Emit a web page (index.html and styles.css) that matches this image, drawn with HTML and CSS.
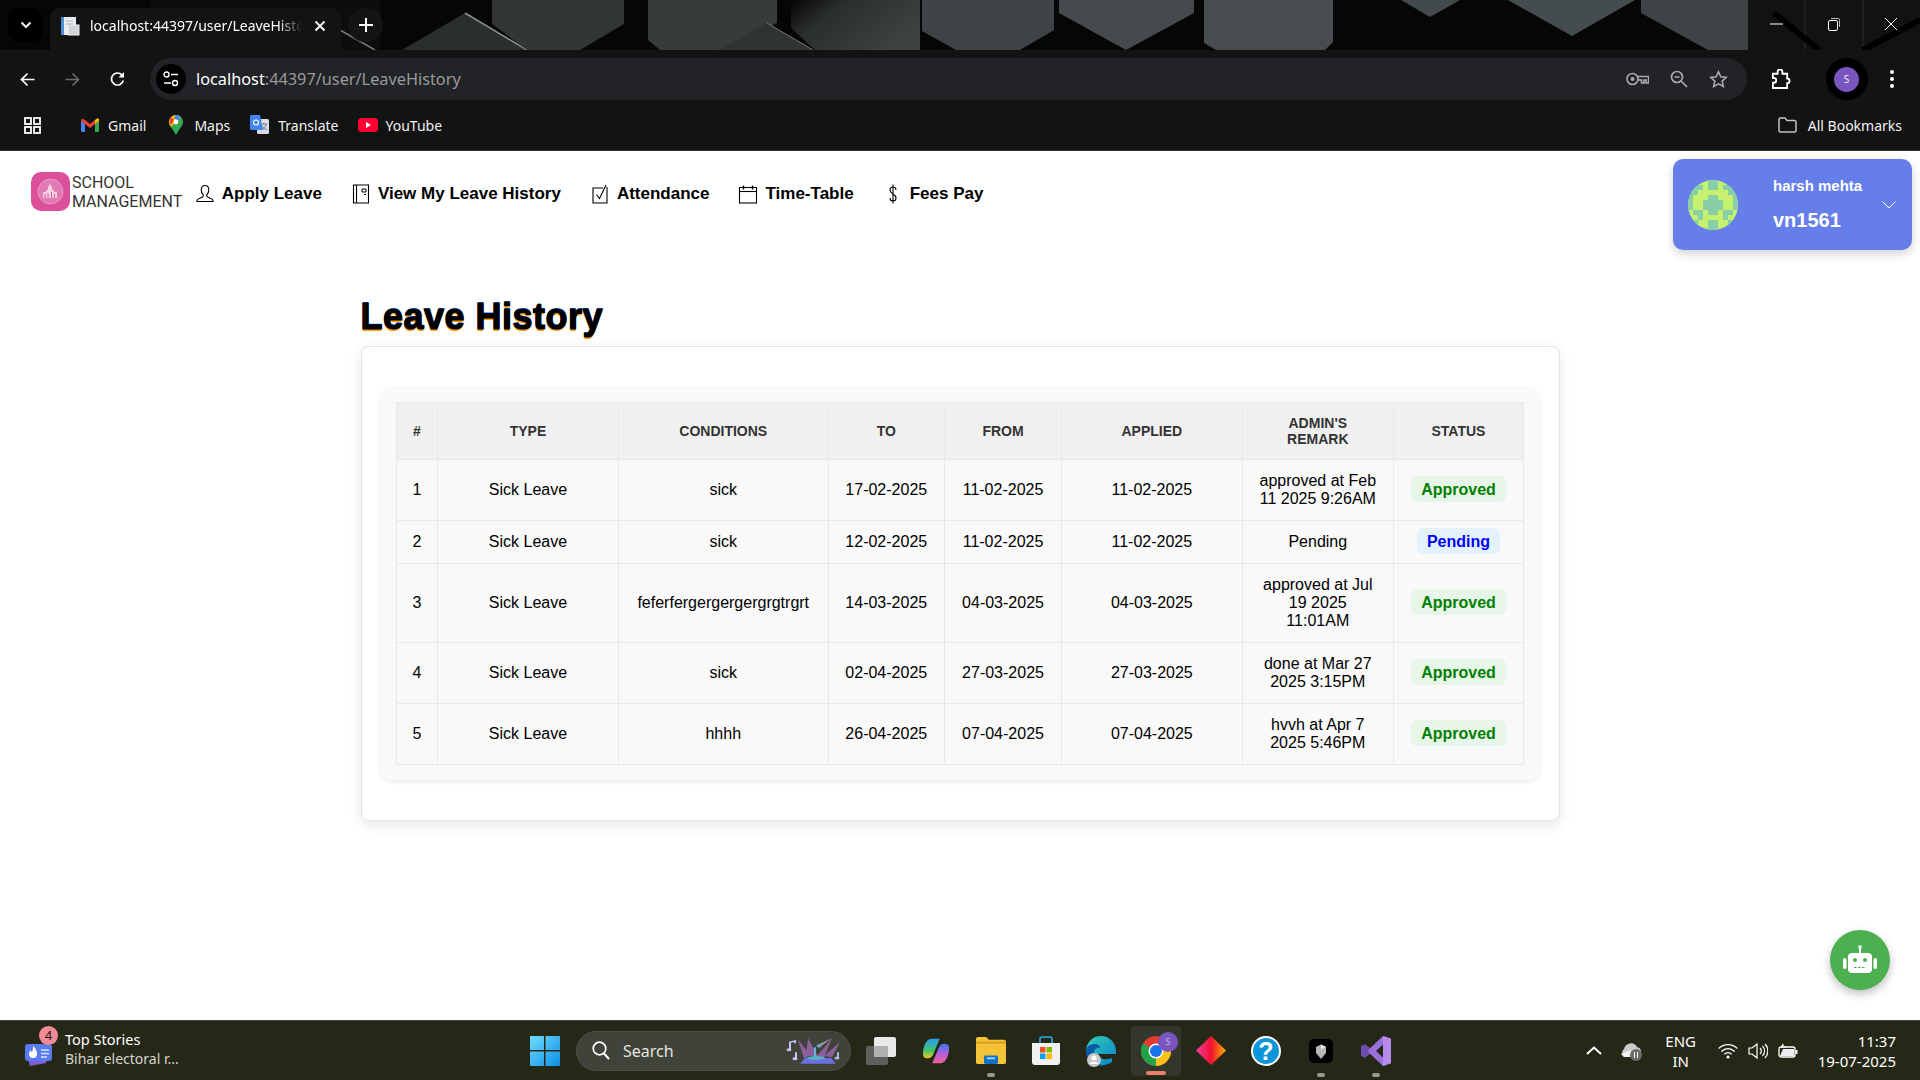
FILE: index.html
```html
<!DOCTYPE html>
<html lang="en">
<head>
<meta charset="utf-8">
<title>Leave History</title>
<link rel="stylesheet" href="styles.css">
</head>
<body>
<header class="chrome">
  <div class="tabstrip">
    <svg class="wallpaper" width="1920" height="50" viewBox="0 0 1920 50">
      <defs>
        <linearGradient id="wpE" x1="0" y1="0" x2="1" y2="0.5"><stop offset="0" stop-color="#050505"/><stop offset="0.35" stop-color="#2b2e2f"/><stop offset="1" stop-color="#3c4142"/></linearGradient>
      </defs>
      <rect width="1920" height="50" fill="#060606"/>
      <path d="M150 0h230v50h-230z" fill="#0d0d0d"/>
      <path d="M465 13L527 50H402z" fill="#2b2e2f"/>
      <path d="M465 13L527 50" stroke="#8c9090" stroke-width="1.5" fill="none"/>
      <path d="M340 30L375 50" stroke="#777" stroke-width="1.5" fill="none"/>
      <path d="M492 0H624V24L580 50H527L492 24z" fill="#323637"/>
      <path d="M648 0H777V23L724 50H660L648 40z" fill="#363b3c"/>
      <path d="M767 23L813 50H719z" fill="#2f3334"/>
      <path d="M767 23L813 50" stroke="#777" stroke-width="1" fill="none"/>
      <path d="M791 0H920V50H815L791 28z" fill="url(#wpE)"/>
      <path d="M922 0H1054V30L1020 50H956L922 31z" fill="#3e4445"/>
      <path d="M1059 0H1194V13L1126 50L1059 13z" fill="#454b4c"/>
      <path d="M1204 0H1333V42L1325 50H1216L1204 43z" fill="#474d4e"/>
      <path d="M1401 0H1460L1430 17z" fill="#434a4b"/>
      <path d="M1508 0H1635L1572 36z" fill="#454c4d"/>
      <path d="M1641 0H1748V50H1708L1641 13z" fill="#3e4445"/>
      <path d="M1748 0H1920V50H1748z" fill="#111313"/>
      <path d="M1805 0V50M1863 0V50" stroke="#2c2e2e" stroke-width="1"/>
      <path d="M1774 13L1819 50M1920 20L1863 50" stroke="#000" stroke-width="6" fill="none"/>
    </svg>
    <div class="tab-menu">
      <svg width="12" height="8" viewBox="0 0 12 8"><path d="M1.5 1.5L6 6l4.500-4.500" fill="none" stroke="#fff" stroke-width="2"/></svg>
    </div>
    <div class="tab">
      <svg class="favicon" width="20" height="20" viewBox="0 0 20 20"><rect x="1" y="1" width="15" height="18" fill="#e8edf2"/><rect x="1" y="1" width="3" height="18" fill="#4a90d0"/><rect x="8" y="9" width="11" height="10" fill="#cfd4d8" stroke="#f2f2f2"/><path d="M6 5h7M6 8h7" stroke="#a9b2ba"/></svg>
      <span class="tab-title">localhost:44397/user/LeaveHistory</span>
      <svg width="12" height="12" viewBox="0 0 12 12"><path d="M1.500 1.500l9 9M10.500 1.500l-9 9" stroke="#fff" stroke-width="1.800"/></svg>
    </div>
    <div class="tab-new">
      <svg width="14" height="14" viewBox="0 0 14 14"><path d="M7 0v14M0 7h14" stroke="#fff" stroke-width="2"/></svg>
    </div>
    <div class="win-controls">
      <svg width="14" height="14" viewBox="0 0 14 14"><path d="M0 7h13" stroke="#fff" stroke-width="1"/></svg>
      <svg width="14" height="14" viewBox="0 0 14 14"><rect x="1.500" y="3.500" width="9" height="10" rx="1.500" fill="none" stroke="#fff"/><path d="M4 1.500h7.500a1 1 0 0 1 1 1V10" fill="none" stroke="#bbb"/></svg>
      <svg width="14" height="14" viewBox="0 0 14 14"><path d="M1 1l12 12M13 1L1 13" stroke="#fff" stroke-width="1"/></svg>
    </div>
  </div>
  <div class="toolbar">
    <svg width="15" height="15" viewBox="0 0 15 15"><path d="M14.500 7.500H1.500M7.500 1.500l-6 6 6 6" fill="none" stroke="#fff" stroke-width="1.700"/></svg>
    <svg width="15" height="15" viewBox="0 0 15 15"><path d="M.5 7.500h13M7.500 1.500l6 6-6 6" fill="none" stroke="#6b6b6b" stroke-width="1.700"/></svg>
    <svg width="15" height="16" viewBox="0 0 15 16"><path d="M13.300 9.500A6 6 0 1 1 11.800 3.800L13.500 5.500" fill="none" stroke="#fff" stroke-width="1.700"/><path d="M14 1v5.500H8.500z" fill="#fff"/></svg>
    <div class="omnibox">
      <div class="site-btn">
        <svg width="16" height="16" viewBox="0 0 16 16"><circle cx="3.500" cy="3.500" r="2.500" fill="none" stroke="#fff" stroke-width="1.400"/><path d="M8 3.500h7M1 12h7" stroke="#fff" stroke-width="1.400"/><circle cx="12" cy="12" r="2.500" fill="none" stroke="#fff" stroke-width="1.400"/></svg>
      </div>
      <div class="url"><span class="url-host">localhost</span>:44397/user/LeaveHistory</div>
      <div class="omni-icons">
        <svg width="23" height="14" viewBox="0 0 23 14"><circle cx="6.500" cy="7" r="5.500" fill="none" stroke="#aaa" stroke-width="1.600"/><circle cx="6.500" cy="7" r="2" fill="#aaa"/><path d="M12 4.500h10.500V11H20V8h-2v3h-2.500V8H12" fill="none" stroke="#aaa" stroke-width="1.600"/></svg>
        <svg width="18" height="18" viewBox="0 0 18 18"><circle cx="7" cy="7" r="5.500" fill="none" stroke="#aaa" stroke-width="1.700"/><path d="M4.500 7h5M11 11l6 6" stroke="#aaa" stroke-width="1.700"/></svg>
        <svg width="19" height="19" viewBox="0 0 19 19"><path d="M9.500 1.800l2.300 5 5.400.6-4 3.700 1.100 5.400-4.800-2.700-4.800 2.700 1.100-5.400-4-3.700 5.400-.6z" fill="none" stroke="#aaa" stroke-width="1.600"/></svg>
      </div>
    </div>
    <div class="tool-right">
      <svg width="21" height="21" viewBox="0 0 21 21"><path d="M2 5h5V3a2.500 2.500 0 0 1 5 0v2h5v5a2.500 2.500 0 0 1 0 5v5H2v-5.500h1a2.500 2.500 0 0 0 0-5H2z" fill="none" stroke="#fff" stroke-width="1.900" transform="scale(.95)"/></svg>
      <div class="profile-pill"><span class="profile-dot">S</span></div>
      <svg width="4" height="18" viewBox="0 0 4 18"><circle cx="2" cy="2" r="2" fill="#fff"/><circle cx="2" cy="9" r="2" fill="#fff"/><circle cx="2" cy="16" r="2" fill="#fff"/></svg>
    </div>
  </div>
  <div class="bookmarks">
    <svg class="apps" width="17" height="17" viewBox="0 0 17 17"><g fill="none" stroke="#fff" stroke-width="1.800"><rect x="1" y="1" width="6" height="6"/><rect x="10" y="1" width="6" height="6"/><rect x="1" y="10" width="6" height="6"/><rect x="10" y="10" width="6" height="6"/></g></svg>
    <div class="bm bm-gmail">
      <svg width="18" height="14" viewBox="0 0 18 14"><path d="M0 3v9.500A1.500 1.500 0 0 0 1.500 14H4V6z" fill="#4285f4"/><path d="M14 6v8h2.500a1.500 1.500 0 0 0 1.500-1.500V3z" fill="#34a853"/><path d="M0 3l4 3 5 4 5-4 4-3-1-2.500L14 2 9 6 4 2 1 .5z" fill="#ea4335"/><path d="M14 2l2.500-1.700C17.500 0 18 1 18 3l-4 3z" fill="#fbbc04"/></svg>
      <span>Gmail</span>
    </div>
    <div class="bm bm-maps">
      <svg width="14" height="20" viewBox="0 0 14 20"><path d="M7 0a7 7 0 0 1 7 7c0 4-4 7-7 13C4 14 0 11 0 7a7 7 0 0 1 7-7z" fill="#34a853"/><path d="M7 0a7 7 0 0 1 5 2L2 12C1 10.500 0 9 0 7a7 7 0 0 1 7-7z" fill="#fbbc04"/><path d="M7 0a7 7 0 0 1 5 2L8.500 5.500 5 3z" fill="#4285f4"/><path d="M2 2L5 5 2 10C.5 8 0 5 2 2z" fill="#ea4335"/><circle cx="7" cy="7" r="2.400" fill="#fff"/></svg>
      <span>Maps</span>
    </div>
    <div class="bm bm-translate">
      <svg width="19" height="20" viewBox="0 0 19 20"><rect x="7" y="4" width="12" height="15" rx="1.500" fill="#d7dde4"/><path d="M10 9h7M13.500 8v1M11 15c3-1 5-3 5-6M12 11c1 2 3 3 5 4" fill="none" stroke="#777"/><path d="M1.500 0H10l3 15H1.500A1.500 1.500 0 0 1 0 13.500v-12A1.500 1.500 0 0 1 1.500 0z" fill="#4285f4"/><circle cx="6" cy="7.500" r="2.500" fill="none" stroke="#fff" stroke-width="1.200"/></svg>
      <span>Translate</span>
    </div>
    <div class="bm bm-yt">
      <svg width="20" height="14" viewBox="0 0 20 14"><rect width="20" height="14" rx="3.500" fill="#ff0033"/><path d="M8 4l5 3-5 3z" fill="#fff"/></svg>
      <span>YouTube</span>
    </div>
    <div class="bm bm-all">
      <svg width="19" height="16" viewBox="0 0 19 16"><path d="M1 2.500A1.500 1.500 0 0 1 2.500 1H7l2 2.500h7.500A1.500 1.500 0 0 1 18 5v8.500a1.500 1.500 0 0 1-1.500 1.500h-14A1.500 1.500 0 0 1 1 13.500z" fill="none" stroke="#c2c2c2" stroke-width="1.500"/></svg>
      <span>All Bookmarks</span>
    </div>
  </div>
</header>

<main class="page">
  <nav class="navbar">
    <div class="brand">
      <div class="brand-logo">
        <svg width="27" height="27" viewBox="0 0 27 27"><circle cx="13.500" cy="13.500" r="12.500" fill="#e07bb4" stroke="#eda4cd" stroke-width=".8"/><path d="M6 20v-6h3v-2h2v-3l2-3 2 3v3h2v2h3v6z" fill="#f5cfe4"/><path d="M8 20v-4M11 20v-5M14.500 20v-6M17.500 20v-4" stroke="#d95aa0" stroke-width="1"/></svg>
      </div>
      <div class="brand-text">SCHOOL<br>MANAGEMENT</div>
    </div>
    <ul class="menu">
      <li class="menu-item">
        <svg width="20" height="20" viewBox="0 0 20 20"><path d="M10 1.500c2.400 0 3.800 1.900 3.800 4.300 0 2.200-.9 4-2 5v1.500c0 1 4.700 2 5.700 3.200.6.800.6 1.500.6 2H1.900c0-.5 0-1.200.6-2 1-1.200 5.700-2.200 5.700-3.200v-1.500c-1.100-1-2-2.800-2-5 0-2.400 1.400-4.300 3.800-4.300z" fill="none" stroke="#000" stroke-width="1.100"/></svg>
        <span>Apply Leave</span>
      </li>
      <li class="menu-item">
        <svg width="20" height="20" viewBox="0 0 20 20"><path d="M2.500 1h15v18h-15zM5.500 1v18" fill="none" stroke="#000" stroke-width="1.100"/><path d="M11 5h4v3h-4zM13 10.500h2" fill="none" stroke="#000" stroke-width="1"/></svg>
        <span>View My Leave History</span>
      </li>
      <li class="menu-item">
        <svg width="20" height="20" viewBox="0 0 20 20"><path d="M17 3v16H3V4h10" fill="none" stroke="#000" stroke-width="1.100"/><path d="M6.500 10.500l3 4L16 1" fill="none" stroke="#000" stroke-width="1.100"/></svg>
        <span>Attendance</span>
      </li>
      <li class="menu-item">
        <svg width="20" height="20" viewBox="0 0 20 20"><rect x="1.500" y="3.500" width="17" height="15.500" fill="none" stroke="#000" stroke-width="1.100"/><path d="M1.500 7.500h17" stroke="#000" stroke-width="1.100"/><path d="M5.500 1.500v4M14.500 1.500v4" stroke="#000" stroke-width="1.400"/></svg>
        <span>Time-Table</span>
      </li>
      <li class="menu-item">
        <svg width="20" height="20" viewBox="0 0 20 20"><path d="M13 6c0-2-1.500-3-3-3S7 4 7 6c0 4.500 6 3.500 6 8 0 2-1.500 3-3 3s-3-1-3-3M10 .5v19" fill="none" stroke="#000" stroke-width="1.100"/></svg>
        <span>Fees Pay</span>
      </li>
    </ul>
    <div class="user-card">
      <svg class="avatar" width="50" height="50" viewBox="0 0 10 10">
        <rect width="10" height="10" fill="#c6f16f"/>
        <g fill="#88cfa7">
          <path d="M4 0h2v2H4zM0 1h3v1H0zM7 1h3v1H7zM0 2h2v1H0zM8 2h2v1H8z"/>
          <path d="M4 3h2v1H4zM3 4h4v2H3zM4 6h2v1H4z"/>
          <path d="M0 3h1v3H0zM9 3h1v3H9zM2 6h1v1H2zM7 6h1v1H7zM1 6h1v1H1zM8 6h1v1H8z"/>
          <path d="M2 7h1v1H2zM7 7h1v1H7zM4 8h2v2H4z"/>
          <path d="M0 8h2v2H0zM8 8h2v2H8z"/>
        </g>
      </svg>
      <div class="user-text">
        <div class="user-name">harsh mehta</div>
        <div class="user-id">vn1561</div>
      </div>
      <svg class="user-caret" width="14" height="8" viewBox="0 0 14 8"><path d="M.5.5L7 7 13.500.5" fill="none" stroke="#fff" stroke-width="1"/></svg>
    </div>
  </nav>

  <section class="content">
    <h1 class="title">Leave History</h1>
    <div class="card">
      <div class="panel">
        <table class="grid">
          <colgroup>
            <col class="c1"><col class="c2"><col class="c3"><col class="c4"><col class="c5"><col class="c6"><col class="c7"><col class="c8">
          </colgroup>
          <thead>
            <tr><th>#</th><th>Type</th><th>Conditions</th><th>To</th><th>From</th><th>Applied</th><th>Admin's Remark</th><th>Status</th></tr>
          </thead>
          <tbody>
            <tr><td>1</td><td>Sick Leave</td><td>sick</td><td>17-02-2025</td><td>11-02-2025</td><td>11-02-2025</td><td>approved at Feb 11 2025 9:26AM</td><td><span class="badge ok">Approved</span></td></tr>
            <tr><td>2</td><td>Sick Leave</td><td>sick</td><td>12-02-2025</td><td>11-02-2025</td><td>11-02-2025</td><td>Pending</td><td><span class="badge wait">Pending</span></td></tr>
            <tr><td>3</td><td>Sick Leave</td><td>feferfergergergergrgtrgrt</td><td>14-03-2025</td><td>04-03-2025</td><td>04-03-2025</td><td>approved at Jul 19 2025 11:01AM</td><td><span class="badge ok">Approved</span></td></tr>
            <tr><td>4</td><td>Sick Leave</td><td>sick</td><td>02-04-2025</td><td>27-03-2025</td><td>27-03-2025</td><td>done at Mar 27 2025 3:15PM</td><td><span class="badge ok">Approved</span></td></tr>
            <tr><td>5</td><td>Sick Leave</td><td>hhhh</td><td>26-04-2025</td><td>07-04-2025</td><td>07-04-2025</td><td>hvvh at Apr 7 2025 5:46PM</td><td><span class="badge ok">Approved</span></td></tr>
          </tbody>
        </table>
      </div>
    </div>
  </section>

  <button class="chat-btn" type="button" aria-label="Chat">
    <svg width="60" height="60" viewBox="0 0 60 60">
      <rect x="29" y="16" width="2" height="8" fill="#fff"/><circle cx="30" cy="17" r="1.800" fill="#fff"/>
      <rect x="18" y="23" width="24" height="20" rx="4" fill="#fff"/>
      <rect x="13" y="28" width="3.500" height="11" rx="1.700" fill="#fff"/><rect x="43.500" y="28" width="3.500" height="11" rx="1.700" fill="#fff"/>
      <circle cx="25" cy="30" r="2" fill="#4caf50"/><circle cx="35" cy="30" r="2" fill="#4caf50"/>
      <path d="M24 37.500h12" stroke="#4caf50" stroke-width="1" stroke-dasharray="2.500 1.500"/>
    </svg>
  </button>
</main>

<footer class="taskbar">
  <div class="widget">
    <div class="widget-icon">
      <svg width="28" height="32" viewBox="0 0 28 32"><path d="M3 24l20-2-2 6-16 3z" fill="#7e5fd0"/><rect x="0" y="9" width="27" height="17" rx="3" fill="#5a7af0"/><path d="M8 11c3 3 4 5 4 8a4 4 0 0 1-8 0c0-2 1-3 2-4 0 1 0 2 1 2 1-2 1-4 1-6z" fill="#fff"/><path d="M16 15h8M16 18.500h8M16 22h6" stroke="#dce4ff" stroke-width="1.500"/></svg>
      <span class="widget-badge">4</span>
    </div>
    <div class="widget-text">
      <div class="widget-title">Top Stories</div>
      <div class="widget-sub">Bihar electoral r...</div>
    </div>
  </div>
  <svg class="start" width="30" height="30" viewBox="0 0 30 30">
    <defs><linearGradient id="winA" x1="0" y1="0" x2="1" y2="1"><stop offset="0" stop-color="#6fdcfb"/><stop offset="1" stop-color="#0c8fe8"/></linearGradient></defs>
    <path d="M1 0h13v14H0V1a1 1 0 0 1 1-1zM15.500 0H29a1 1 0 0 1 1 1v13H15.500zM0 15.500h14V30H1a1 1 0 0 1-1-1zM15.500 15.500H30V29a1 1 0 0 1-1 1H15.500z" fill="url(#winA)"/>
  </svg>
  <div class="search">
    <svg width="18" height="19" viewBox="0 0 18 19"><circle cx="7.500" cy="7.500" r="6.300" fill="none" stroke="#fff" stroke-width="1.700"/><path d="M12 12.500l5 5.500" stroke="#fff" stroke-width="2"/></svg>
    <span class="search-text">Search</span>
    <svg class="search-art" width="56" height="28" viewBox="0 0 56 44" preserveAspectRatio="none">
      <path d="M12 4l12 24-6 6zM22 2l10 28H20zM46 2l-8 30H30zM54 8l-8 24-8-2z" fill="#8a5f9c"/>
      <path d="M32 12l14-10-11 12z" fill="#9aa5ae"/><circle cx="33" cy="14" r="2.500" fill="#6ba4c0"/>
      <path d="M29 16v18" stroke="#6bb0d8" stroke-width="2"/>
      <path d="M14 42l5-9h26l5 9z" fill="#6b70e0"/><ellipse cx="30" cy="33" rx="9" ry="3" fill="#58b0c8"/>
      <path d="M4 8v12M4 8l5-2v4" stroke="#c8c0f0" stroke-width="2" fill="none"/><circle cx="3" cy="20" r="2.500" fill="#c8c0f0"/>
      <path d="M10 24v10" stroke="#c8c0f0" stroke-width="2"/><circle cx="9" cy="34" r="2.500" fill="#c8c0f0"/>
      <path d="M52 24v9" stroke="#a8b8e8" stroke-width="2"/><circle cx="51" cy="33" r="2.500" fill="#a8b8e8"/>
    </svg>
  </div>
  <div class="apps-row">
    <div class="app">
      <svg width="30" height="28" viewBox="0 0 30 28"><rect x="0" y="9" width="22" height="19" rx="2" fill="#5e5e5e"/><rect x="8" y="0" width="22" height="20" rx="2" fill="#e9e9e9"/><rect x="8" y="9" width="14" height="11" fill="#b0b0b0"/></svg>
    </div>
    <div class="app">
      <svg width="28" height="26" viewBox="0 0 30 32" preserveAspectRatio="none">
        <defs><linearGradient id="copA" x1="0" y1="0" x2="0" y2="1"><stop offset="0" stop-color="#2a9df0"/><stop offset=".6" stop-color="#3fc56c"/><stop offset="1" stop-color="#f5c518"/></linearGradient><linearGradient id="copB" x1="0" y1="0" x2="0" y2="1"><stop offset="0" stop-color="#3a7af0"/><stop offset=".5" stop-color="#b060e0"/><stop offset="1" stop-color="#f06090"/></linearGradient></defs>
        <path d="M10 1h9L12 20c-1 3-3 5-6 5-4 0-5-3-5-5 0-8 3-19 9-19z" fill="url(#copA)"/>
        <path d="M20 31h-9l7-19c1-3 3-5 6-5 4 0 5 3 5 5 0 8-3 19-9 19z" fill="url(#copB)"/>
      </svg>
    </div>
    <div class="app dotted">
      <svg width="30" height="27" viewBox="0 0 30 29" preserveAspectRatio="none"><path d="M0 2a2 2 0 0 1 2-2h8l3 3h15a2 2 0 0 1 2 2v22a2 2 0 0 1-2 2H2a2 2 0 0 1-2-2z" fill="#f3c338"/><path d="M0 5h30v2H0z" fill="#d99a1e"/><rect x="8" y="20" width="14" height="9" rx="1.500" fill="#1273c4"/><rect x="11" y="22" width="8" height="1.800" fill="#a8d8ff"/></svg>
    </div>
    <div class="app">
      <svg width="30" height="30" viewBox="0 0 30 30"><path d="M9 8V3a2 2 0 0 1 2-2h8a2 2 0 0 1 2 2v5" fill="none" stroke="#25b0e8" stroke-width="1.600"/><path d="M1 7h28v19a3 3 0 0 1-3 3H4a3 3 0 0 1-3-3z" fill="#f0f0f0"/><rect x="9" y="11" width="5.500" height="5.500" fill="#f25022"/><rect x="15.500" y="11" width="5.500" height="5.500" fill="#7fba00"/><rect x="9" y="17.500" width="5.500" height="5.500" fill="#00a4ef"/><rect x="15.500" y="17.500" width="5.500" height="5.500" fill="#ffb900"/></svg>
    </div>
    <div class="app">
      <svg width="30" height="32" viewBox="0 0 30 32">
        <defs><linearGradient id="edgA" x1="0" y1="0" x2="1" y2="1"><stop offset="0" stop-color="#2fd0b0"/><stop offset="1" stop-color="#0c7fd0"/></linearGradient></defs>
        <path d="M15 1a15 15 0 0 1 15 15v3H12c0 4 5 7 14 4v4c-6 4-13 4-18 1C2 24 0 18 0 14 2 5 8 1 15 1z" fill="url(#edgA)"/>
        <path d="M0 16c0-5 5-7 9-7 3 0 5 2 5 4-3-1-6 1-6 5s3 10 10 13C6 31 0 24 0 16z" fill="#0a5aa8"/>
        <circle cx="8" cy="25" r="7" fill="#c8c8c8"/><circle cx="8" cy="23" r="2.500" fill="#fff"/><path d="M3.500 29c1-3 8-3 9 0z" fill="#fff"/>
      </svg>
    </div>
    <div class="app active">
      <svg width="30" height="30" viewBox="0 0 30 30"><circle cx="15" cy="15" r="15" fill="#e33b2e"/><path d="M15 15L28 7.500A15 15 0 0 1 15 30z" fill="#fbc116"/><path d="M15 15L15 30A15 15 0 0 1 2 7.500z" fill="#22a34b"/><circle cx="15" cy="15" r="7.500" fill="#fff"/><circle cx="15" cy="15" r="6" fill="#1a73e8"/></svg>
      <span class="profile-badge">S</span>
    </div>
    <div class="app">
      <svg width="30" height="29" viewBox="0 0 30 38" preserveAspectRatio="none"><defs><linearGradient id="dmA" x1="0" y1="0" x2="1" y2="0"><stop offset="0" stop-color="#f040a0"/><stop offset=".5" stop-color="#f01030"/><stop offset="1" stop-color="#ffb000"/></linearGradient></defs><path d="M15 0l15 19-15 19L0 19z" fill="url(#dmA)"/></svg>
    </div>
    <div class="app">
      <svg width="30" height="30" viewBox="0 0 30 30"><circle cx="15" cy="15" r="15" fill="#fff"/><circle cx="15" cy="15" r="13" fill="#0a96d8"/><text x="15" y="24" text-anchor="middle" class="help-mark">?</text></svg>
    </div>
    <div class="app dotted">
      <svg width="24" height="24" viewBox="0 0 24 24"><rect width="24" height="24" rx="5" fill="#000"/><path d="M7 8l5-2.500L17 8v6l-5 6-5-6z" fill="#b8b8b8"/><path d="M12 5.500L17 8l-5 2.500z" fill="#e8e8e8"/></svg>
    </div>
    <div class="app dotted">
      <svg width="30" height="30" viewBox="0 0 30 32" preserveAspectRatio="none"><path d="M22 0l8 3v26l-8 3L9 19l-5 4-4-2V11l4-2 5 4zM22 9l-7 7 7 7z" fill="#9a6fd8"/><path d="M22 0l8 3v26l-8 3z" fill="#b58cee"/><path d="M0 11l4-2 5 4-2 3 2 3-5 4-4-2z" fill="#6d4bb0"/></svg>
    </div>
  </div>
  <div class="tray">
    <svg class="tray-chev" width="16" height="9" viewBox="0 0 16 9"><path d="M1 8l7-6.500L15 8" fill="none" stroke="#fff" stroke-width="2"/></svg>
    <div class="tray-cloud">
      <svg width="22" height="20" viewBox="0 0 22 20"><path d="M3 16a5 5 0 0 1 0-8 7 7 0 0 1 13-2 5 5 0 0 1 3 8v2z" fill="#c8ccc8"/><path d="M0 13l9-4 5 7H3z" fill="#eef0ee"/><circle cx="15" cy="14" r="6" fill="#6c6c6c"/><path d="M13.500 11v6M16.500 11v6" stroke="#fff" stroke-width="1"/></svg>
    </div>
    <div class="tray-lang">ENG<br>IN</div>
    <div class="tray-icons">
      <svg width="20" height="16" viewBox="0 0 20 16"><g fill="none" stroke="#fff" stroke-width="1.300"><path d="M.7 5.500a13 13 0 0 1 18.600 0"/><path d="M3.500 8.500a9 9 0 0 1 13 0"/><path d="M6.500 11.200a5 5 0 0 1 7 0"/></g><circle cx="10" cy="14" r="1.600" fill="#fff"/></svg>
      <svg width="20" height="16" viewBox="0 0 20 16"><path d="M1 5h3l5-4v14l-5-4H1z" fill="none" stroke="#fff" stroke-width="1.200"/><path d="M12 5a4 4 0 0 1 0 6M14.500 3a7 7 0 0 1 0 10M17 1a10 10 0 0 1 0 14" fill="none" stroke="#fff" stroke-width="1.200"/></svg>
      <svg width="20" height="16" viewBox="0 0 20 16"><rect x="1" y="4" width="16" height="10" rx="2" fill="none" stroke="#fff" stroke-width="1.300"/><rect x="17.500" y="7" width="2" height="4" fill="#fff"/><path d="M2 13l3-7h11v7z" fill="#eee"/><path d="M3 5l2-4v3h3" fill="none" stroke="#fff" stroke-width="1.100"/></svg>
    </div>
    <div class="tray-clock">11:37<br>19-07-2025</div>
  </div>
</footer>
</body>
</html>
```
FILE: styles.css
```css
* { box-sizing: border-box; }
html, body { margin: 0; padding: 0; height: 100%; }
body {
  display: flex;
  flex-direction: column;
  height: 1080px;
  overflow: hidden;
  background: #fff;
  font-family: "Liberation Sans", Arial, sans-serif;
  color: #000;
}
svg { display: block; flex: none; }

/* Browser chrome */
.chrome { flex: none; background: #131313; font-family: "Noto Sans", "Open Sans", sans-serif; color: #fff; }
.tabstrip { position: relative; height: 50px; display: flex; align-items: flex-start; padding: 8px 0 0 8px; }
.wallpaper { position: absolute; left: 0; top: 0; }
.tab-menu, .tab-new {
  position: relative;
  width: 35px;
  height: 34px;
  border-radius: 12px;
  display: flex;
  align-items: center;
  justify-content: center;
}
.tab-menu { background: #000; }
.tab-new { background: #141414; margin-left: 7px; border-radius: 17px; }
.tab {
  position: relative;
  margin-left: 7px;
  width: 291px;
  height: 42px;
  padding: 0 15px 7px 10px;
  background: #131313;
  border-radius: 10px 10px 0 0;
  display: flex;
  align-items: center;
  gap: 10px;
}
.tab-title {
  flex: 1;
  min-width: 0;
  height: 20px;
  font-size: 14px;
  line-height: 20px;
  white-space: nowrap;
  overflow: hidden;
  -webkit-mask-image: linear-gradient(to right, #000 88%, transparent 99%);
  mask-image: linear-gradient(to right, #000 88%, transparent 99%);
}
.win-controls {
  position: relative;
  margin-left: auto;
  padding: 9px 22px 0 0;
  display: flex;
  gap: 43px;
}
.toolbar { height: 56px; padding: 2px 0 0 20px; display: flex; align-items: center; gap: 30px; }
.omnibox {
  flex: 1;
  height: 42px;
  margin-left: -5px;
  padding: 0 19px 0 6px;
  border-radius: 21px;
  background: #212327;
  display: flex;
  align-items: center;
}
.site-btn {
  width: 30px;
  height: 30px;
  border-radius: 50%;
  background: #000;
  display: flex;
  align-items: center;
  justify-content: center;
}
.url { margin-left: 10px; font-size: 16.300px; color: #9a9a9a; white-space: nowrap; }
.url-host { color: #fff; }
.omni-icons { margin-left: auto; display: flex; align-items: center; gap: 21px; }
.tool-right { width: 149.500px; margin-left: -6px; display: flex; align-items: center; }
.profile-pill {
  margin-left: 34px;
  width: 42px;
  height: 42px;
  border-radius: 21px;
  background: #000;
  display: flex;
  align-items: center;
  justify-content: center;
}
.profile-dot {
  width: 25px;
  height: 25px;
  border-radius: 50%;
  background: #7a55c0;
  color: #eee;
  font-size: 10px;
  display: flex;
  align-items: center;
  justify-content: center;
}
.tool-right > svg:last-child { margin-left: 22px; }
.bookmarks {
  height: 44px;
  padding-left: 24px;
  padding-bottom: 6px;
  display: flex;
  align-items: center;
  font-size: 14px;
  color: #f2f2f2;
}
.apps { margin-right: 40px; }
.bm { display: flex; align-items: center; gap: 9px; margin-right: 21px; }
.bm-gmail { margin-right: 23px; }
.bm-maps { gap: 11px; margin-right: 20px; }
.bm-translate { margin-right: 20px; }
.bm-yt { gap: 7px; }
.bm-all { margin-left: auto; margin-right: 18px; gap: 11px; }

/* Page */
.page { position: relative; flex: 1; min-height: 0; border-top: 1px solid #333; }
.navbar { height: 108px; padding: 8px 8px 0 31px; display: flex; align-items: flex-start; }
.brand { display: flex; align-items: center; gap: 2px; margin-top: 13px; }
.brand-logo {
  width: 39px;
  height: 39px;
  border-radius: 10px;
  background: #dc4f9b;
  display: flex;
  align-items: center;
  justify-content: center;
}
.brand-text { font-family: Roboto, sans-serif; font-size: 16px; line-height: 19px; color: #333; }
.menu {
  list-style: none;
  margin: 13px 0 0 12.500px;
  padding: 6px 0 0;
  display: flex;
  gap: 29px;
  font-size: 17px;
  font-weight: bold;
}
.menu-item { display: flex; align-items: center; gap: 7px; height: 36px; margin-top: -2px; }
.user-card {
  margin-left: auto;
  width: 239px;
  height: 91px;
  padding: 0 15px;
  border-radius: 10px;
  background: #667eea;
  color: #fff;
  box-shadow: 0 4px 10px rgba(0,0,0,.18);
  display: flex;
  align-items: center;
}
.avatar { border-radius: 50%; }
.user-text { margin-left: 35px; font-weight: bold; }
.user-name { font-size: 15px; line-height: 18px; margin-bottom: 14px; margin-top: 0; }
.user-id { font-size: 20px; line-height: 23px; }
.user-caret { margin-left: auto; margin-right: 1px; }

.content { width: 1199px; margin: 37px auto 0; }
.title {
  margin: 0 0 9px;
  font-size: 36px;
  line-height: 41px;
  font-weight: bold;
  letter-spacing: .5px;
  color: #000;
  -webkit-text-stroke: 1.200px #000;
  text-shadow: 0 -1.500px 0 #0070ff, 0 1.500px 0 #ffa000;
}
.card {
  height: 475px;
  padding: 40px 18.500px;
  background: #fff;
  border: 1px solid #e2e4e6;
  border-radius: 8px;
  box-shadow: 0 4px 14px rgba(0,0,0,.1);
}
.panel {
  height: 393px;
  padding: 15px 16px;
  background: #f9f9f9;
  border-radius: 12px;
  box-shadow: 0 2px 4px rgba(0,0,0,.08);
}
.grid { width: 1127px; table-layout: fixed; border-collapse: collapse; font-size: 16px; line-height: 18px; }
.c1 { width: 41px; }
.c2 { width: 181px; }
.c3 { width: 209.500px; }
.c4 { width: 116.500px; }
.c5 { width: 117px; }
.c6 { width: 180.600px; }
.c7 { width: 151.400px; }
.c8 { width: 130px; }
.grid th, .grid td { border: 1px solid #e6eaee; text-align: center; vertical-align: middle; }
.grid th {
  height: 57px;
  padding: 12px 15px;
  background: #f0f0f0;
  color: #333;
  font-size: 14px;
  line-height: 16px;
  text-transform: uppercase;
}
.grid td { padding: 12px 15px; background: #f9f9f9; color: #000; }
.badge {
  padding: 4.500px 10px;
  border-radius: 6px;
  font-weight: bold;
  line-height: 16px;
  vertical-align: 1px;
}
.ok { background: #e8f5e9; color: #008000; }
.wait { background: #e3f2fd; color: #0000ff; }

.chat-btn {
  position: absolute;
  right: 30px;
  bottom: 30px;
  width: 60px;
  height: 60px;
  padding: 0;
  border: 0;
  border-radius: 50%;
  background: #4caf50;
  box-shadow: 0 4px 10px rgba(0,0,0,.25);
}

/* Taskbar */
.taskbar {
  flex: none;
  height: 60px;
  padding-left: 25px;
  display: flex;
  align-items: center;
  background: #262817;
  border-top: 1px solid #444;
  color: #fff;
  font-family: "Noto Sans", "Open Sans", sans-serif;
}
.widget { width: 505px; display: flex; align-items: center; }
.widget-icon { position: relative; width: 28px; height: 32px; }
.widget-badge {
  position: absolute;
  left: 14px;
  top: -9px;
  width: 19px;
  height: 19px;
  border-radius: 50%;
  background: #f28a96;
  color: #111;
  font-size: 13px;
  line-height: 19px;
  text-align: center;
}
.widget-text { margin-left: 12px; margin-top: -3px; font-size: 14.500px; line-height: 20px; }
.widget-sub { color: #d4d4cc; font-size: 14px; }
.start { margin-top: 1px; }
.search {
  margin-left: 16px;
  width: 275px;
  height: 40px;
  padding: 0 8px 0 15px;
  display: flex;
  align-items: center;
  border-radius: 20px;
  background: #40433a;
  border: 1px solid #4d5045;
}
.search-text { margin-left: 13px; font-size: 16px; color: #e4e4de; }
.search-art { margin-left: auto; }
.apps-row { margin-left: 15px; display: flex; gap: 25px; align-items: center; }
.app { position: relative; width: 30px; height: 50px; display: flex; align-items: center; justify-content: center; }
.app.dotted::after {
  content: "";
  position: absolute;
  left: 11px;
  bottom: -1px;
  width: 8px;
  height: 4px;
  border-radius: 2px;
  background: #9a9a94;
}
.app.active::before {
  content: "";
  position: absolute;
  left: -10px;
  right: -10px;
  top: 0;
  bottom: 0;
  border-radius: 4px;
  background: #33362a;
}
.app.active::after {
  content: "";
  position: absolute;
  left: 5px;
  bottom: 1px;
  width: 20px;
  height: 4px;
  border-radius: 2px;
  background: #e8806a;
}
.app.active svg { position: relative; }
.profile-badge {
  position: absolute;
  left: 17px;
  top: 6px;
  width: 20px;
  height: 20px;
  border-radius: 50%;
  background: #7a55c0;
  color: #c9b8e8;
  font-size: 9px;
  line-height: 20px;
  text-align: center;
}
.help-mark { font-family: "Liberation Sans", sans-serif; font-size: 25px; font-weight: bold; fill: #fff; }
.tray { margin-left: auto; padding-right: 24px; display: flex; align-items: center; }
.tray-cloud { margin-left: 19px; }
.tray-lang { margin-left: 19px; width: 38px; text-align: center; font-size: 15px; line-height: 20px; }
.tray-icons { margin-left: 18px; display: flex; gap: 10px; }
.tray-clock { margin-left: 20px; text-align: right; font-size: 15px; line-height: 20px; }
```
